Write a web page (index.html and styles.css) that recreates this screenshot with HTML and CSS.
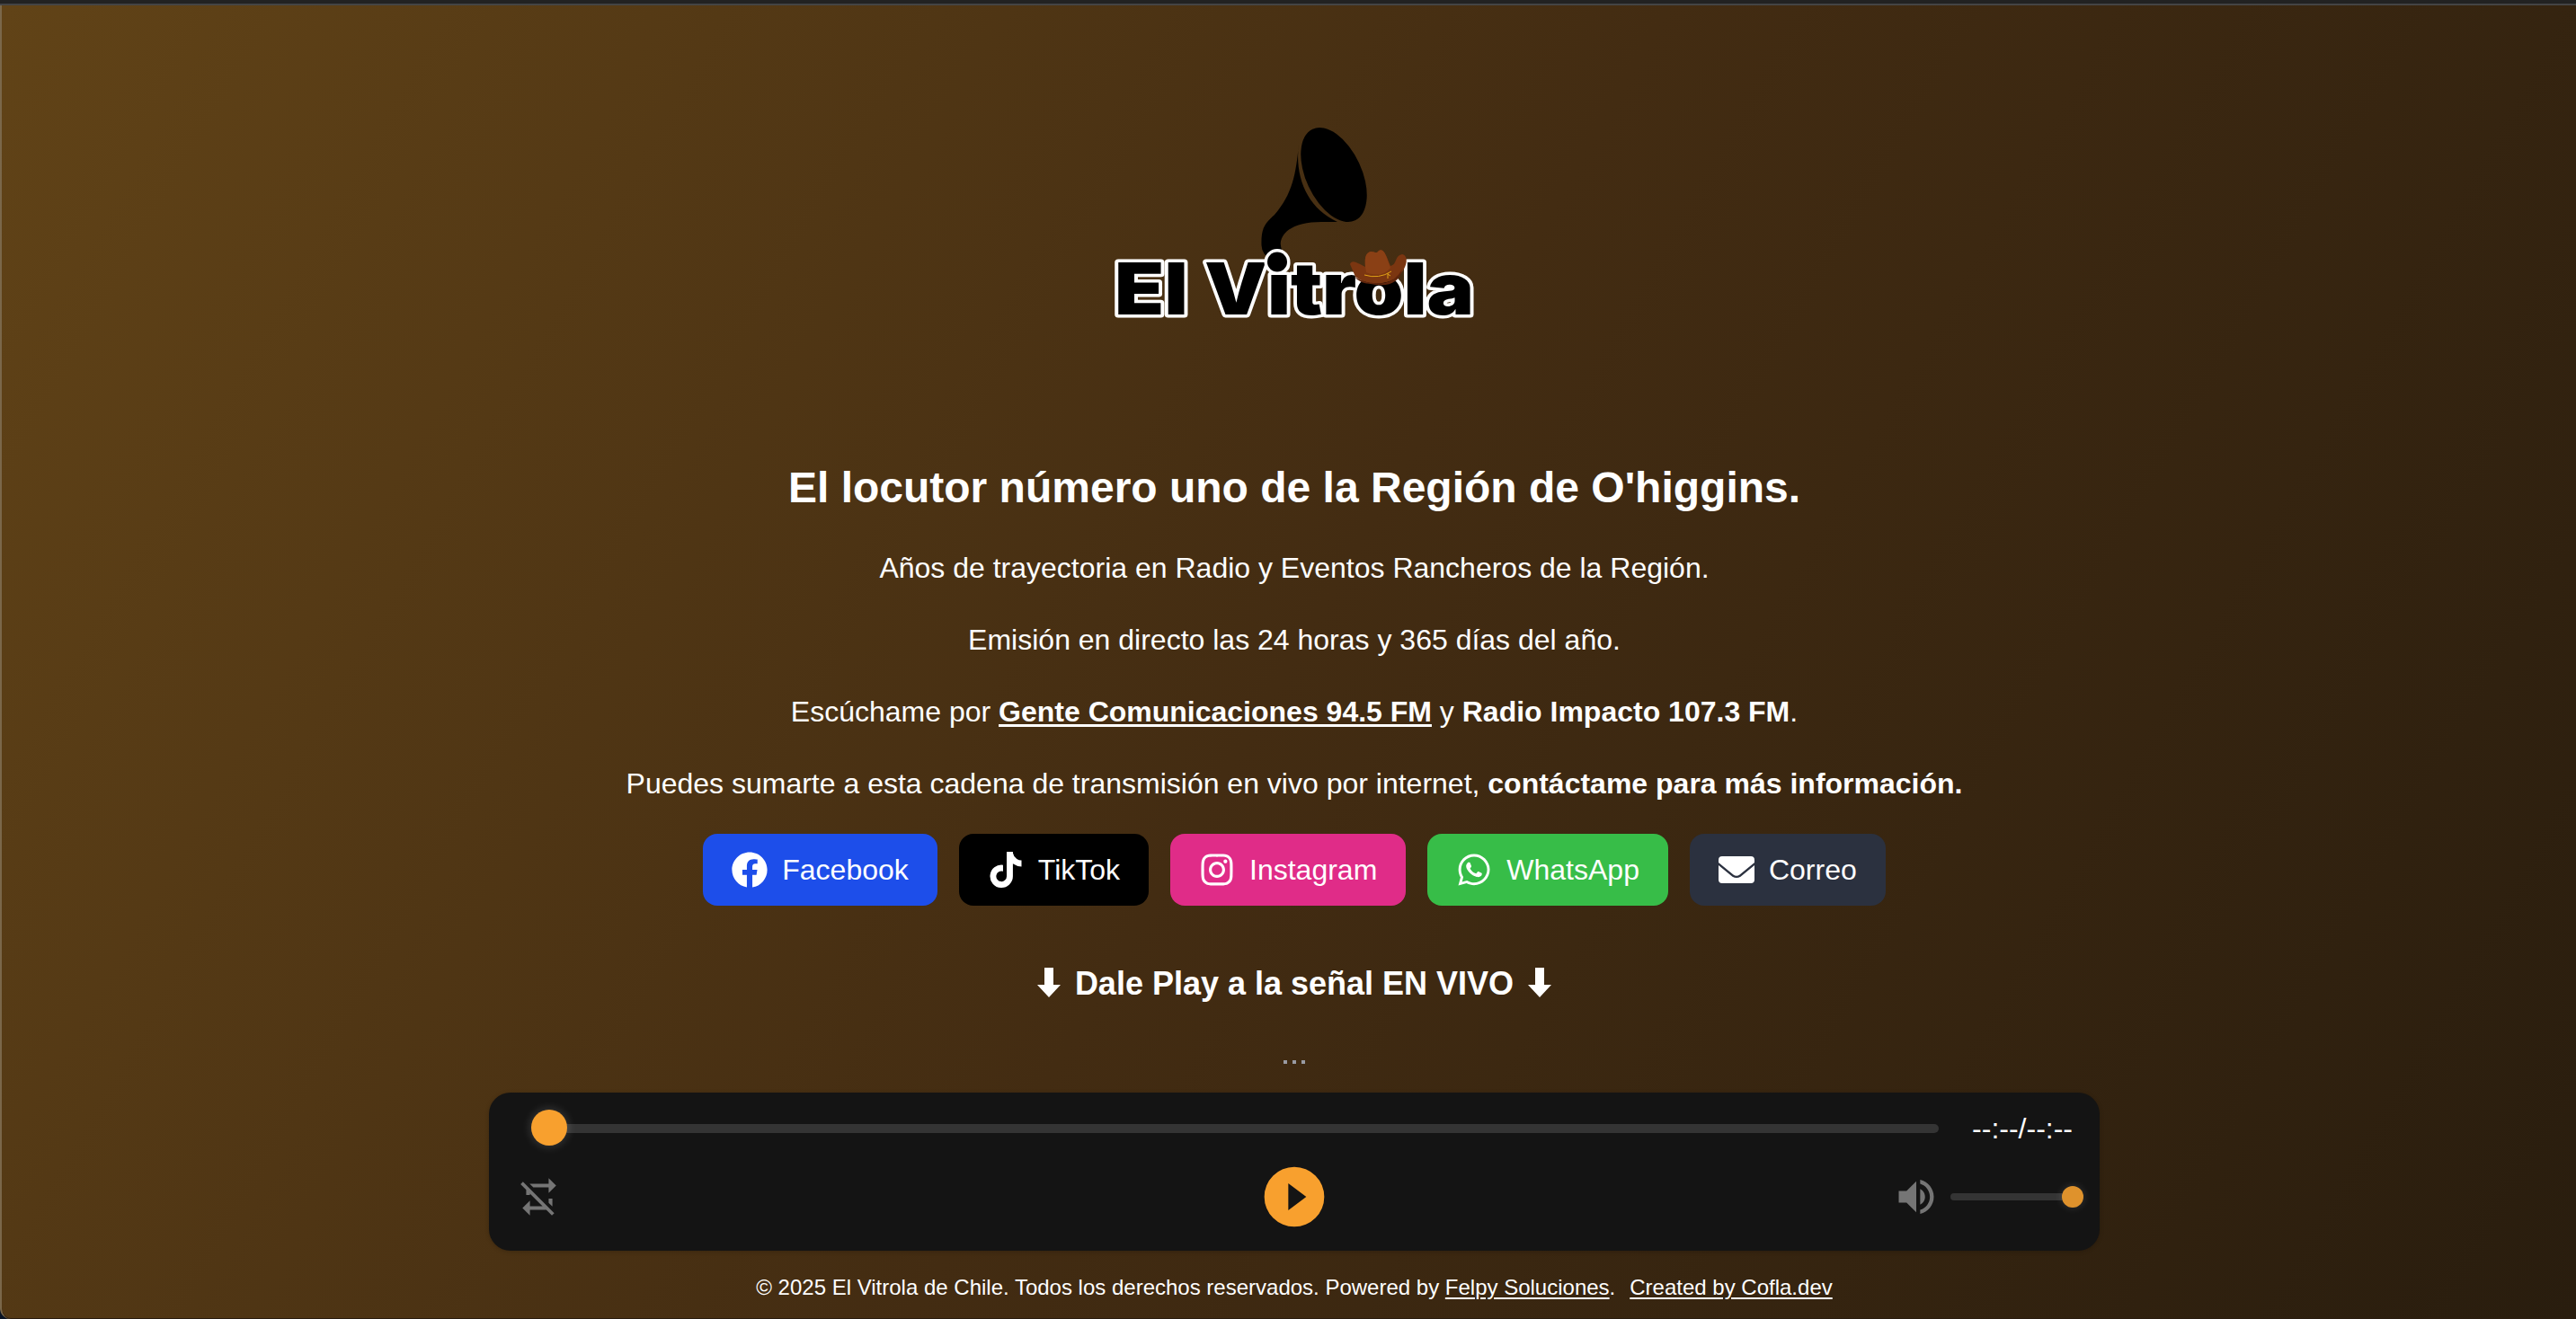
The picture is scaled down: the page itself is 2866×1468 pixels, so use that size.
FILE: index.html
```html
<!DOCTYPE html>
<html lang="es">
<head>
<meta charset="utf-8">
<title>El Vitrola</title>
<link rel="stylesheet" href="styles.css">
</head>
<body>
<div class="chrome"></div>
<div class="page">
  <main class="main">
    <svg class="logo" viewBox="0 0 480 270" role="img" aria-label="El Vitrola">
      <path d="M245 50C242 83 238 106 218 129C206 140 203 145 203.500 163Q204 175 215 177H231Q225 169 224.700 161C226 145 245 137 270 137H288C255 122 240 88 245 50Z"/>
      <ellipse cx="284" cy="84.500" rx="31" ry="56" transform="rotate(-25 284 84.500)"/>
      <g class="wordmark">
        <text class="wordmark-line" x="40" y="240" textLength="82" lengthAdjust="spacingAndGlyphs">El</text>
        <text class="wordmark-line" x="140" y="240" textLength="300" lengthAdjust="spacingAndGlyphs">Vitrola</text>
        <circle class="dot" cx="221" cy="181.500" r="11"/>
      </g>
      <path d="M302 184C304 178 311 183 319 187C318 176 320 171 325 170C330 170 331 173 334 169C340 165 343 177 347 186C355 184 351 175 360 173C367 174 367 187 355 198C341 209 319 207 308 198Z" fill="#7b3611"/>
      <path d="M319 187C318 176 320 171 325 170C330 170 331 173 334 169C340 165 343 177 347 188C340 197 329 197 320 193Z" fill="#8a4015"/>
      <path d="M307 198Q321 207 340 205Q352 203 360 190Q355 212 325 206Q312 205 307 198Z" fill="#5f250c"/>
      <path d="M318 196Q334 201 348 192M344 194L344 200M344 195L347 197" fill="none" stroke="#e0a116" stroke-width="1"/>
    </svg>
    <h1>El locutor número uno de la Región de O'higgins.</h1>
    <div class="intro">
      <p>Años de trayectoria en Radio y Eventos Rancheros de la Región.</p>
      <p>Emisión en directo las 24 horas y 365 días del año.</p>
      <p>Escúchame por <a href="#"><b>Gente Comunicaciones 94.5 FM</b></a> y <b>Radio Impacto 107.3 FM</b>.</p>
      <p>Puedes sumarte a esta cadena de transmisión en vivo por internet, <b>contáctame para más información.</b></p>
    </div>
    <nav class="social">
      <a class="btn facebook" href="#"><svg viewBox="1.800 1.800 20.400 20.400"><path d="M12 2.040C6.500 2.040 2 6.530 2 12.060C2 17.060 5.660 21.210 10.440 21.960V14.960H7.900V12.060H10.440V9.850C10.440 7.340 11.930 5.960 14.220 5.960C15.310 5.960 16.450 6.150 16.450 6.150V8.620H15.190C13.950 8.620 13.560 9.390 13.560 10.180V12.060H16.340L15.890 14.960H13.560V21.960A10 10 0 0 0 22 12.060C22 6.530 17.500 2.040 12 2.040Z"/></svg>Facebook</a>
      <a class="btn tiktok" href="#"><svg viewBox="0 0 448 512"><path d="M448 209.900a210.100 210.100 0 0 1-122.800-39.300v178.800A162.600 162.600 0 1 1 185 188.300v89.900a74.600 74.600 0 1 0 52.200 71.200V0h88a121 121 0 0 0 1.900 22.200 122.200 122.200 0 0 0 53.900 80.200 121 121 0 0 0 67 20.100Z"/></svg>TikTok</a>
      <a class="btn instagram" href="#"><svg viewBox="0 0 448 512"><path d="M224.100 141c-63.600 0-114.900 51.300-114.900 114.900s51.300 114.900 114.900 114.900S339 319.500 339 255.900 287.700 141 224.100 141zm0 189.600c-41.100 0-74.700-33.500-74.700-74.700s33.500-74.700 74.700-74.700 74.700 33.500 74.700 74.700-33.600 74.700-74.700 74.700zm146.400-194.300c0 14.900-12 26.800-26.800 26.800-14.900 0-26.800-12-26.800-26.800s12-26.800 26.800-26.800 26.800 12 26.800 26.800zm76.100 27.200c-1.700-35.900-9.900-67.700-36.200-93.900-26.200-26.200-58-34.400-93.900-36.200-37-2.100-147.900-2.100-184.900 0-35.800 1.700-67.600 9.900-93.900 36.100s-34.400 58-36.200 93.900c-2.100 37-2.100 147.900 0 184.900 1.700 35.900 9.900 67.700 36.200 93.900s58 34.400 93.900 36.200c37 2.100 147.900 2.100 184.900 0 35.900-1.700 67.700-9.900 93.900-36.200 26.200-26.200 34.400-58 36.200-93.900 2.100-37 2.100-147.800 0-184.800zM398.800 388c-7.800 19.600-22.900 34.700-42.600 42.600-29.500 11.700-99.500 9-132.100 9s-102.700 2.600-132.100-9c-19.600-7.800-34.700-22.900-42.600-42.600-11.700-29.500-9-99.500-9-132.100s-2.600-102.700 9-132.100c7.800-19.600 22.900-34.700 42.600-42.600 29.500-11.700 99.500-9 132.100-9s102.700-2.600 132.100 9c19.600 7.800 34.700 22.900 42.600 42.600 11.700 29.500 9 99.500 9 132.100s2.700 102.700-9 132.100z"/></svg>Instagram</a>
      <a class="btn whatsapp" href="#"><svg viewBox="0 0 448 512"><path d="M380.900 97.100C339 55.100 283.200 32 223.900 32c-122.400 0-222 99.600-222 222 0 39.100 10.200 77.300 29.600 111L0 480l117.700-30.900c32.400 17.700 68.900 27 106.100 27h.1c122.300 0 224.100-99.600 224.100-222 0-59.300-25.200-115-67.100-157zm-157 341.600c-33.200 0-65.700-8.900-94-25.700l-6.700-4-69.800 18.300L72 359.200l-4.400-7c-18.500-29.400-28.200-63.300-28.200-98.200 0-101.700 82.800-184.500 184.600-184.500 49.300 0 95.600 19.200 130.400 54.100 34.800 34.900 56.200 81.200 56.100 130.500 0 101.800-84.900 184.600-186.600 184.600zm101.200-138.200c-5.500-2.800-32.800-16.200-37.900-18-5.100-1.900-8.800-2.800-12.500 2.800-3.700 5.600-14.300 18-17.600 21.800-3.200 3.700-6.500 4.200-12 1.400-32.600-16.300-54-29.100-75.500-66-5.700-9.800 5.700-9.100 16.300-30.300 1.800-3.700.9-6.900-.5-9.700-1.400-2.800-12.500-30.100-17.100-41.200-4.500-10.800-9.100-9.300-12.500-9.500-3.200-.2-6.900-.2-10.600-.2-3.700 0-9.700 1.400-14.800 6.900-5.100 5.600-19.400 19-19.400 46.300 0 27.300 19.900 53.700 22.600 57.400 2.800 3.700 39.100 59.700 94.800 83.800 35.200 15.200 49 16.500 66.600 13.900 10.700-1.600 32.800-13.400 37.400-26.400 4.600-13 4.600-24.100 3.200-26.400-1.300-2.500-5-3.900-10.500-6.600z"/></svg>WhatsApp</a>
      <a class="btn correo" href="#"><svg viewBox="0 0 40 40"><path d="M0 9Q0 5 4 5H36Q40 5 40 9V12L23.500 25.500Q20 28 16.500 25.500L0 12ZM0 15L15.500 27.700Q20 30.500 24.500 27.700L40 15V31Q40 35 36 35H4Q0 35 0 31Z"/></svg>Correo</a>
    </nav>
    <h2><svg viewBox="0 0 26 34"><path d="M8 0H18V19H26L13 33L0 19H8Z"/></svg>Dale Play a la señal EN VIVO<svg viewBox="0 0 26 34"><path d="M8 0H18V19H26L13 33L0 19H8Z"/></svg></h2>
    <div class="dots"><i></i><i></i><i></i></div>
    <section class="player">
      <div class="row progress">
        <div class="track"><span class="knob"></span></div>
        <span class="time">--:--/--:--</span>
      </div>
      <div class="row controls">
        <svg class="repeat" viewBox="0 0 24 24"><path d="M2 5.270L3.280 4L20 20.720L18.730 22L15.730 19H7V22L3 18L7 14V17H13.730L7 10.270V11H5V8.270L2 5.270M17 13H19V17.180L17 15.180V13M17 5V2L21 6L17 10V7H8.820L6.820 5H17Z"/></svg>
        <svg class="play" viewBox="0 0 24 24"><path d="M10 16.500V7.500L16 12M12 2A10 10 0 0 0 2 12A10 10 0 0 0 12 22A10 10 0 0 0 22 12A10 10 0 0 0 12 2Z"/></svg>
        <div class="volume">
          <svg viewBox="0 0 24 24"><path d="M14 3.230V5.290C16.890 6.150 19 8.830 19 12C19 15.170 16.890 17.840 14 18.700V20.770C18 19.860 21 16.280 21 12C21 7.720 18 4.140 14 3.230M16.500 12C16.500 10.230 15.500 8.710 14 7.970V16C15.500 15.290 16.500 13.760 16.500 12M3 9V15H7L12 20V4L7 9H3Z"/></svg>
          <div class="vtrack"><span class="vknob"></span></div>
        </div>
      </div>
    </section>
    <footer>© 2025 El Vitrola de Chile. Todos los derechos reservados. Powered by <a href="#">Felpy Soluciones</a>.<a class="credit" href="#">Created by Cofla.dev</a></footer>
  </main>
</div>
</body>
</html>
```
FILE: styles.css
```css
* { box-sizing: border-box; }
body { margin: 0; height: 1468px; overflow: hidden; background: #0a1424; color: #fff; font-family: "Liberation Sans", Arial, sans-serif; }
a { color: inherit; }
svg { display: block; fill: currentColor; flex: none; }
.chrome { height: 6px; background: #222; border-bottom: 2px solid #444; }
.page { height: 1462px; border-left: 2px solid #7a674a; border-bottom-left-radius: 12px; background: linear-gradient(120deg, #614317 0%, #432c12 50%, #291d0e 100%); box-shadow: inset 0 -1px #2a1d10; }
.main { width: 1792px; margin-left: 542px; display: flex; flex-direction: column; align-items: center; white-space: nowrap; }
.logo { width: 480px; height: 270px; margin-top: 104px; color: #000; }
.wordmark { font-family: Inter, "Liberation Sans", sans-serif; font-weight: 900; font-size: 80px; stroke: #fff; stroke-width: 7px; stroke-linejoin: round; paint-order: stroke; }
h1 { margin: 131px 0 0; font-size: 48px; line-height: 64px; }
.intro { margin-top: 33px; font-size: 32px; }
.intro p { margin: 0 0 32px; line-height: 48px; text-align: center; }
.intro a { text-decoration-thickness: 3px; text-underline-offset: 3px; }
.social { display: flex; gap: 24px; }
.btn { height: 80px; display: flex; align-items: center; gap: 16px; padding: 0 32px; border-radius: 16px; font-size: 32px; text-decoration: none; }
.btn svg { width: 40px; height: 40px; }
.facebook { background: #1d4eea; }
.tiktok { background: #000; }
.instagram { background: #e02c88; }
.whatsapp { background: #37bd48; }
.correo { background: #2b313f; }
h2 { margin: 59px 0 0; display: flex; align-items: center; gap: 16px; font-size: 36px; line-height: 56px; }
h2 svg { width: 26px; height: 34px; margin-bottom: 2px; }
.dots { display: flex; gap: 6px; margin-top: 57px; height: 4px; }
.dots i { width: 4px; height: 4px; background: #999aa2; }
.player { width: 1792px; height: 176px; margin-top: 32px; background: #141414; border-radius: 24px; box-shadow: 0 1px 5px rgba(0,0,0,.2); }
.row { display: flex; align-items: center; }
.progress { height: 80px; padding: 0 30px 0 47px; justify-content: space-between; }
.track { width: 1566px; height: 10px; background: #343434; border-radius: 5px; display: flex; align-items: center; }
.knob { width: 40px; height: 40px; margin-bottom: 2px; border-radius: 50%; background: #f8a02e; box-shadow: 0 0 12px rgba(255,255,255,.2); flex: none; }
.time { font-size: 32px; }
.controls { height: 72px; padding: 0 18px; display: grid; grid-template: 72px / 1fr 80px 1fr; }
.repeat { width: 50px; height: 50px; margin-left: 13px; color: #757575; }
.play { width: 80px; height: 80px; color: #f8a02e; }
.volume { display: flex; align-items: center; justify-content: flex-end; gap: 12px; }
.volume svg { width: 52px; height: 52px; color: #757575; }
.vtrack { width: 148px; height: 8px; border-radius: 4px; background: #343434; display: flex; align-items: center; justify-content: flex-end; }
.vknob { width: 24px; height: 24px; border-radius: 50%; background: #df922c; box-shadow: 0 0 10px rgba(255,255,255,.15); }
footer { margin-top: 25px; font-size: 24px; line-height: 32px; }
footer a { text-decoration-thickness: 2px; text-underline-offset: 3px; }
.credit { margin-left: 16px; }
```
